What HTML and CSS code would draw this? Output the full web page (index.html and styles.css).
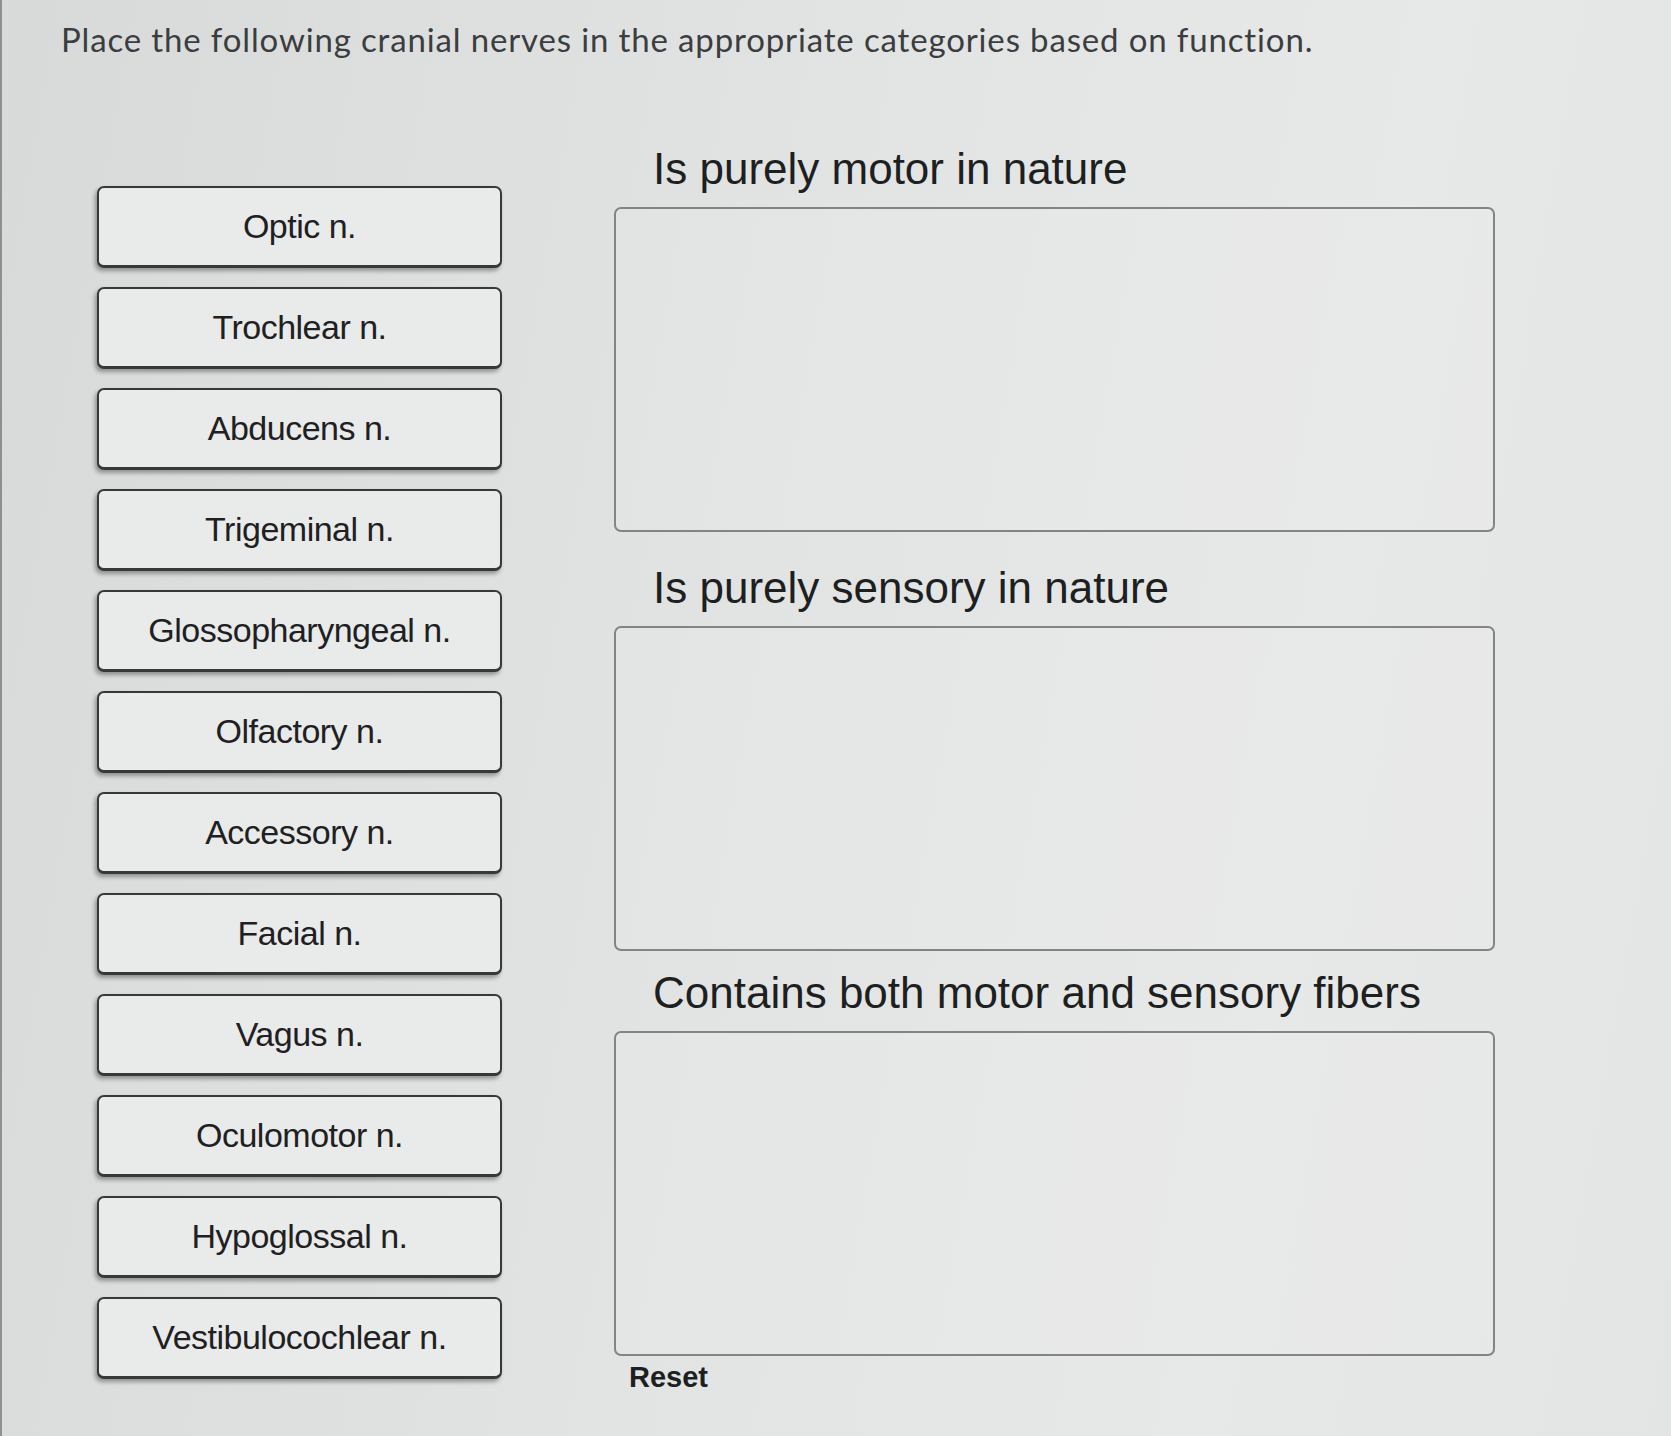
FILE: index.html
```html
<!DOCTYPE html>
<html lang="en">
<head>
<meta charset="utf-8">
<title>Cranial nerves</title>
<link rel="stylesheet" href="styles.css">
</head>
<body>
<div class="page">
  <h1 class="prompt">Place the following cranial nerves in the appropriate categories based on function.</h1>
  <div class="workspace">
    <div class="choices">
      <div class="chip">Optic n.</div>
      <div class="chip">Trochlear n.</div>
      <div class="chip">Abducens n.</div>
      <div class="chip">Trigeminal n.</div>
      <div class="chip">Glossopharyngeal n.</div>
      <div class="chip">Olfactory n.</div>
      <div class="chip">Accessory n.</div>
      <div class="chip">Facial n.</div>
      <div class="chip">Vagus n.</div>
      <div class="chip">Oculomotor n.</div>
      <div class="chip">Hypoglossal n.</div>
      <div class="chip">Vestibulocochlear n.</div>
    </div>
    <div class="targets">
      <section class="category cat-motor">
        <h2 class="cat-title">Is purely motor in nature</h2>
        <div class="dropzone"></div>
      </section>
      <section class="category cat-sensory">
        <h2 class="cat-title">Is purely sensory in nature</h2>
        <div class="dropzone"></div>
      </section>
      <section class="category cat-both">
        <h2 class="cat-title">Contains both motor and sensory fibers</h2>
        <div class="dropzone"></div>
      </section>
      <div class="reset">Reset</div>
    </div>
  </div>
</div>
</body>
</html>
```

FILE: styles.css
```css
html, body {
  margin: 0;
  padding: 0;
  height: 100%;
}

body {
  background: linear-gradient(100deg, #d8dada 0%, #e2e4e4 45%, #e7e8e8 75%, #e3e5e5 100%);
  font-family: "Liberation Sans", Arial, sans-serif;
  color: #222;
  overflow: hidden;
}

.page {
  min-height: 1436px;
  border-left: 2px solid #8e8f90;
  box-sizing: border-box;
}

.prompt {
  margin: 0;
  padding: 19px 0 0 59px;
  font-family: Lato, "Open Sans", sans-serif;
  font-weight: 400;
  font-size: 33px;
  letter-spacing: 0.85px;
  line-height: 40px;
  color: #3b3d3f;
}

.workspace {
  display: flex;
  align-items: flex-start;
  margin-top: 84px;
  padding-left: 95px;
  gap: 112px;
}

.choices {
  display: flex;
  flex-direction: column;
  gap: 19px;
  width: 405px;
  margin-top: 43px;
}

.chip {
  height: 82px;
  box-sizing: border-box;
  display: flex;
  align-items: center;
  justify-content: center;
  background: #e9eaea;
  border: 2px solid #36383a;
  border-bottom-width: 3px;
  border-radius: 7px;
  box-shadow: -2px 3px 4px rgba(0, 0, 0, 0.35);
  font-size: 34px;
  letter-spacing: -0.5px;
  color: #1f2022;
  padding-bottom: 1px;
}

.targets {
  width: 881px;
  display: flex;
  flex-direction: column;
}

.cat-motor {
  margin-bottom: 30px;
}

.cat-sensory {
  margin-bottom: 16px;
}

.cat-both {
  margin-bottom: 4px;
}

.cat-title {
  margin: 0 0 12px 0;
  padding-left: 39px;
  font-size: 44px;
  font-weight: 400;
  line-height: 52px;
  color: #1e1f21;
}

.dropzone {
  height: 325px;
  box-sizing: border-box;
  border: 2px solid #838486;
  border-radius: 7px;
  background: rgba(255, 255, 255, 0.08);
}

.reset {
  padding-left: 15px;
  font-size: 29px;
  font-weight: 700;
  line-height: 34px;
  color: #1e1f21;
}
```
